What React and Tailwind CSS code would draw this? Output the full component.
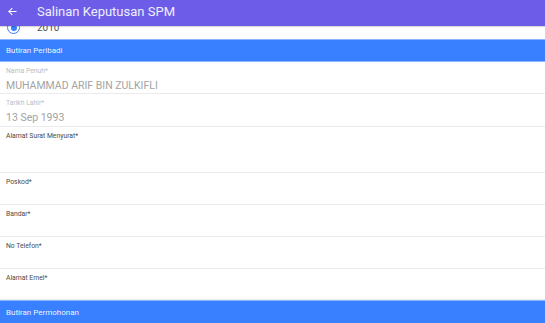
import React from "react";

function Field({ label, value, h, disabled }) {
  return (
    <div className={`flex flex-col border-b border-[#ebebeb] px-[6px] pt-[5px] ${h}`}>
      <div className={`text-[6.8px] leading-[9px] ${disabled ? "text-[#bdbdbd]" : "text-[#4a4a4a]"}`}>{label}</div>
      {value && <div className="mt-[3px] text-[10.5px] leading-[13px] text-[#a3a3a3]">{value}</div>}
    </div>
  );
}

export default function App() {
  return (
    <div className="w-[545px] h-[323px] overflow-hidden bg-white" style={{ fontFamily: "Roboto, 'Noto Sans', sans-serif" }}>
      <div className="relative z-10 flex h-[26px] items-center pb-[4px] bg-[#6c5ce7] shadow-[0_1px_1px_rgba(0,0,0,0.15)]">
        <svg className="ml-[7px]" width="11" height="11" viewBox="0 0 24 24" fill="none" stroke="#fff" strokeWidth="2.2" strokeLinecap="round" strokeLinejoin="round">
          <path d="M20 12H4" />
          <path d="M11 5l-7 7 7 7" />
        </svg>
        <div className="ml-[19px] text-[13px] leading-none text-white/90">Salinan Keputusan SPM</div>
      </div>
      <div className="h-[13px] overflow-hidden">
        <div className="-mt-[6px] flex items-center">
          <div className="ml-[7px] flex h-[13px] w-[13px] items-center justify-center rounded-full border-[1.5px] border-[#3880ff]">
            <div className="h-[6px] w-[6px] rounded-full bg-[#3880ff]" />
          </div>
          <div className="ml-[17px] text-[10px] text-[#555]">2010</div>
        </div>
      </div>
      <div className="flex h-[23px] items-center border-y border-[#8db4ff] bg-[#3880ff] px-[6px] text-[8px] text-white/95">
        Butiran Peribadi
      </div>
      <Field label="Nama Penuh*" value="MUHAMMAD ARIF BIN ZULKIFLI" h="h-[32px]" disabled />
      <Field label="Tarikh Lahir*" value="13 Sep 1993" h="h-[33px]" disabled />
      <Field label="Alamat Surat Menyurat*" h="h-[46px]" />
      <Field label="Poskod*" h="h-[32px]" />
      <Field label="Bandar*" h="h-[32px]" />
      <Field label="No Telefon*" h="h-[32px]" />
      <Field label="Alamat Emel*" h="h-[31px]" />
      <div className="flex h-[24px] items-center border-t border-[#8db4ff] bg-[#3880ff] px-[6px] text-[8px] text-white/95">
        Butiran Permohonan
      </div>
    </div>
  );
}
